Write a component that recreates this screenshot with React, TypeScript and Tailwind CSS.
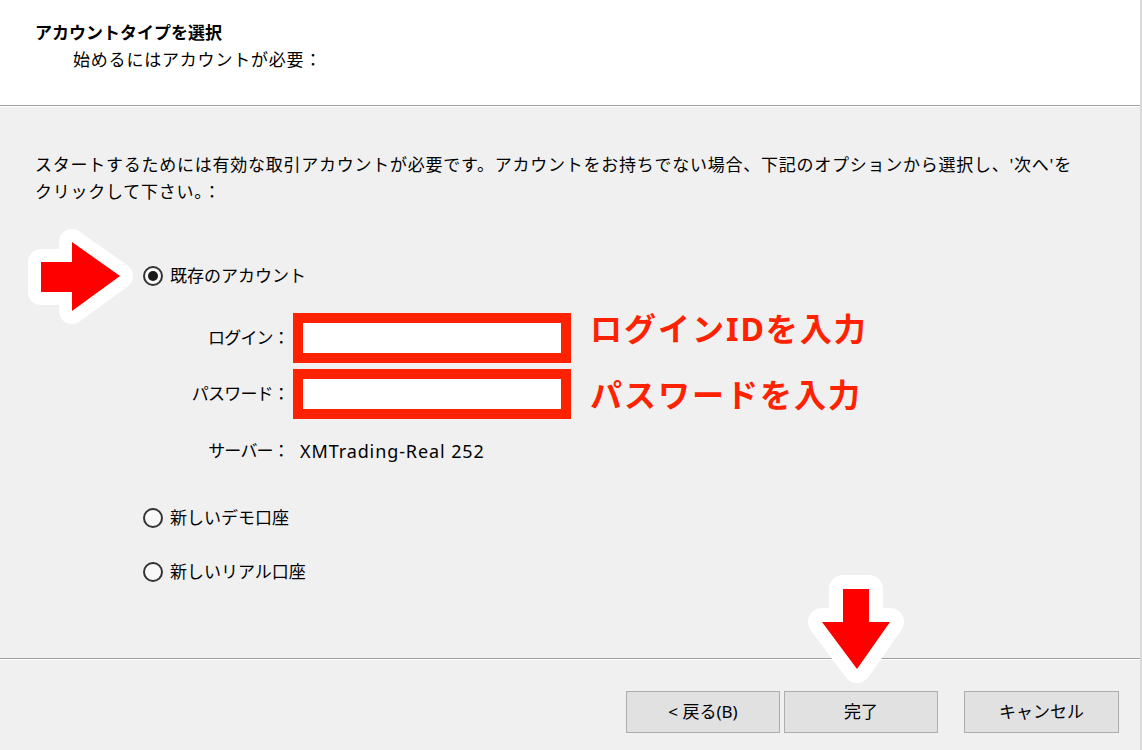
import React from "react";

const ui = "font-['Noto_Sans','Noto_Sans_CJK_JP',sans-serif]";

function Radio({ checked, label }: { checked?: boolean; label: string }) {
  return (
    <div className="flex items-center h-[24px]">
      <span className="w-[20px] h-[20px] rounded-full border-2 border-[#333333] bg-[#f8f8f8] flex items-center justify-center">
        {checked && <span className="w-[10px] h-[10px] rounded-full bg-[#1a1a1a]" />}
      </span>
      <span className="ml-[7px] text-[17px] leading-[24px]">{label}</span>
    </div>
  );
}

function Field({ label, note, noteClass }: { label: string; note: string; noteClass: string }) {
  return (
    <div className="flex items-center">
      <span className="w-[146px] text-right text-[17px] tracking-[-0.8px]">{label}</span>
      <div className="ml-[4px] w-[278px] h-[50px] border-[10px] border-[#ff2200] bg-white" />
      <span className={`ml-[19px] text-[32px] font-bold tracking-[2px] text-[#ff2200] leading-none ${noteClass}`}>
        {note}
      </span>
    </div>
  );
}

export default function App() {
  return (
    <div className={`${ui} relative w-[1142px] h-[750px] flex flex-col bg-[#f0f0f0] border-r-2 border-[#dadada] text-black overflow-hidden`}>
      {/* header */}
      <div className="h-[105px] bg-white pl-[35px] pt-[21px]">
        <div className="text-[17px] font-bold leading-[24px]">アカウントタイプを選択</div>
        <div className="mt-[3px] pl-[38px] text-[17px] leading-[24px] tracking-[0.8px]">始めるにはアカウントが必要：</div>
      </div>
      <div className="h-px bg-[#a0a0a0]" />
      <div className="h-px bg-white" />

      {/* body */}
      <div className="h-[551px] pl-[35px] pt-[44px]">
        <p className="text-[17px] leading-[27px] tracking-[0.75px]">
          スタートするためには有効な取引アカウントが必要です。アカウントをお持ちでない場合、下記のオプションから選択し、'次へ'を
          <br />
          クリックして下さい。：
        </p>

        <div className="ml-[108px]">
          <div className="mt-[59px]">
            <Radio checked label="既存のアカウント" />
          </div>

          <div className="mt-[25px]">
            <Field label="ログイン：" note="ログインIDを入力" noteClass="mb-[18px]" />
          </div>
          <div className="mt-[6px]">
            <Field label="パスワード：" note="パスワードを入力" noteClass="mt-[2px]" />
          </div>

          <div className="mt-[20px] flex items-center h-[24px]">
            <span className="w-[146px] text-right text-[17px] tracking-[-0.8px]">サーバー：</span>
            <span className="ml-[11px] text-[18px] tracking-[0.9px]">XMTrading-Real 252</span>
          </div>

          <div className="mt-[43px]">
            <Radio label="新しいデモ口座" />
          </div>
          <div className="mt-[30px]">
            <Radio label="新しいリアル口座" />
          </div>
        </div>
      </div>

      <div className="h-px bg-[#a0a0a0]" />
      <div className="h-px bg-white" />

      {/* footer */}
      <div className="flex-1 flex justify-end items-start pt-[31px] pr-[21px]">
        <button className="w-[154px] h-[42px] bg-[#e1e1e1] border border-[#adadad] text-[17px]">&lt; 戻る(B)</button>
        <button className="ml-[4px] w-[154px] h-[42px] bg-[#e1e1e1] border border-[#adadad] text-[17px]">完了</button>
        <button className="ml-[26px] w-[155px] h-[42px] bg-[#e1e1e1] border border-[#adadad] text-[17px]">キャンセル</button>
      </div>

      {/* annotation arrows */}
      <svg className="absolute inset-0 pointer-events-none" width="1142" height="750" viewBox="0 0 1142 750">
        <polygon
          points="41,262 72,262 72,242 120,276 72,311 72,292 41,292"
          fill="#ffffff"
          stroke="#ffffff"
          strokeWidth="26"
          strokeLinejoin="round"
        />
        <polygon points="41,262 72,262 72,242 120,276 72,311 72,292 41,292" fill="#ff0000" />
        <polygon
          points="843,589 869,589 869,622 890,622 857,669 822,622 843,622"
          fill="#ffffff"
          stroke="#ffffff"
          strokeWidth="28"
          strokeLinejoin="round"
        />
        <polygon points="843,589 869,589 869,622 890,622 857,669 822,622 843,622" fill="#ff0000" />
      </svg>
    </div>
  );
}
